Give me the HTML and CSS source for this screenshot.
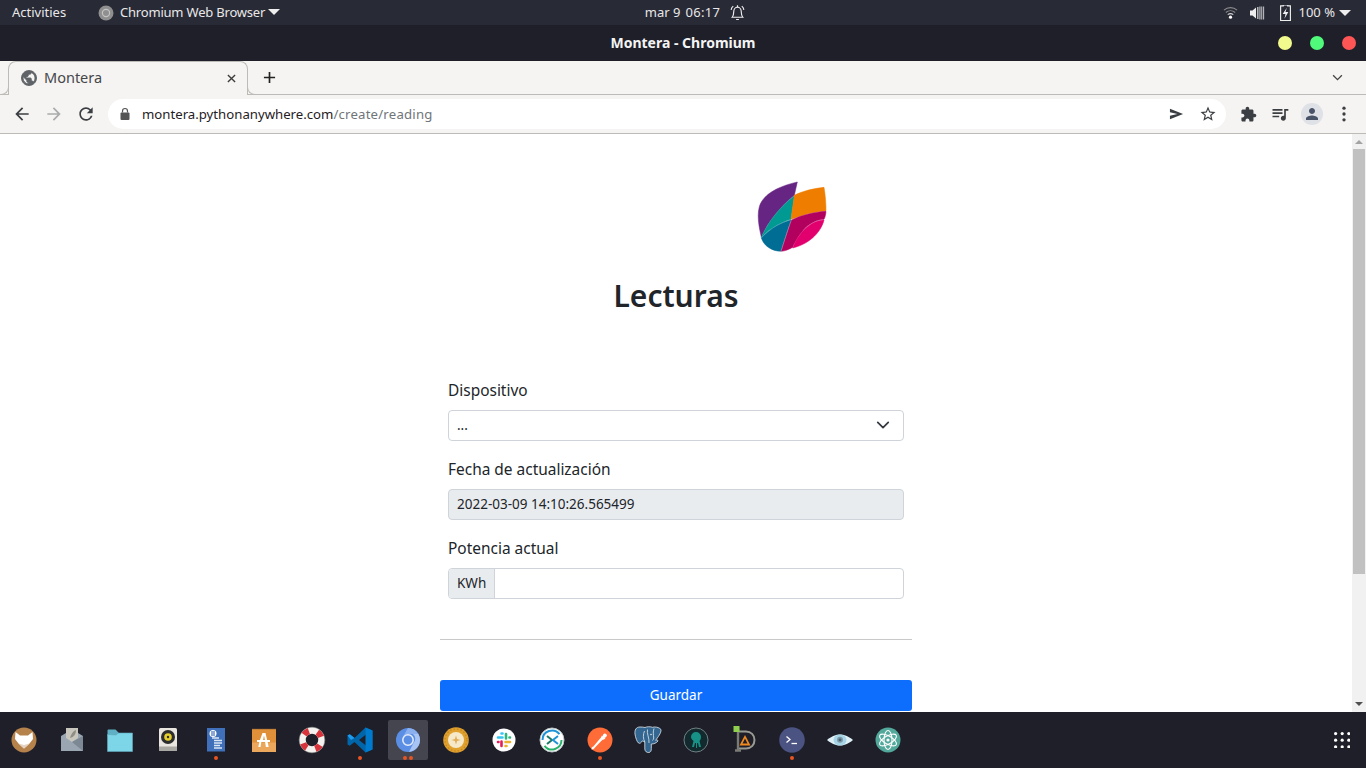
FILE: index.html
```html
<!DOCTYPE html>
<html lang="es">
<head>
  <meta charset="utf-8">
  <title>Montera - Chromium</title>
  <link rel="stylesheet" href="styles.css">
</head>
<body>
  <!-- gnome top bar -->
  <div class="panel">
    <div class="panel-left">
      <span class="activities">Activities</span>
      <span class="app-menu">
        <svg class="app-icon" viewBox="0 0 16 16"><circle cx="8" cy="8" r="7.5" fill="#8f8f8f"/><circle cx="8" cy="8" r="3.6" fill="#8f8f8f" stroke="#c4c4c4" stroke-width="1.2"/></svg>
        Chromium Web Browser
        <i class="caret"></i>
      </span>
    </div>
    <div class="panel-center">
      <span class="clock-date">mar 9</span>
      <span class="clock-time">06:17</span>
      <svg class="bell" viewBox="0 0 16 16" fill="none" stroke="#eee" stroke-width="1.1"><path d="M3 12.5c1.2-1.3 1.4-2.6 1.4-4.8C4.4 5 6 3 8 3s3.6 2 3.6 4.7c0 2.2.2 3.5 1.4 4.8z"/><path d="M6.7 14.6h2.6M8 1.2V3M2 5.5C2.2 4 3 2.8 4 2M14 5.5c-.2-1.5-1-2.7-2-3.5"/></svg>
    </div>
    <div class="panel-right">
      <svg class="wifi" viewBox="0 0 16 16" fill="none" stroke="#8d8d8d" stroke-width="1.1"><path d="M1 5.5c4-3.6 10-3.6 14 0M3 8c2.9-2.4 7.100-2.400 10 0" /><path d="M5 10.300c1.800-1.300 4.200-1.300 6 0" stroke="#cfcfcf"/><circle cx="8" cy="13" r="1.700" fill="#fff" stroke="none"/></svg>
      <svg class="volume" viewBox="0 0 16 16" fill="#eee"><path d="M1 5.500h2.500L7 2.500v11l-3.500-3H1z"/><path d="M8.300 2h1.100v12H8.300zM10.500 1.500h.9v13h-.9zM12.400 1.500h.8v13h-.8zM14.300 1.500h.8v13h-.8z"/></svg>
      <svg class="battery" viewBox="0 0 14 18"><path d="M4.500 1V0h5v1h3v16.500h-11V1z" fill="none" stroke="#eee" stroke-width="1.300"/><path d="M8.500 3 3.800 10H7l-1.200 5.500L10.200 8H7z" fill="#eee"/></svg>
      <span class="battery-text">100 %</span>
      <i class="caret"></i>
    </div>
  </div>

  <!-- window title -->
  <div class="titlebar">
    <span class="title-spacer"></span>
    <span class="title-text">Montera - Chromium</span>
    <span class="window-buttons">
      <i class="win-btn win-yellow"></i>
      <i class="win-btn win-green"></i>
      <i class="win-btn win-red"></i>
    </span>
  </div>

  <div class="tabstrip">
    <div class="tab">
      <svg class="tab-globe" viewBox="0 0 24 24"><path d="M12 2C6.480 2 2 6.480 2 12s4.480 10 10 10 10-4.480 10-10S17.520 2 12 2zm-1 17.930c-3.950-.490-7-3.850-7-7.930 0-.620.080-1.210.210-1.790L9 15v1c0 1.100.900 2 2 2v1.930zm6.900-2.540c-.260-.810-1-1.390-1.900-1.390h-1v-3c0-.550-.450-1-1-1H8v-2h2c.550 0 1-.450 1-1V7h2c1.100 0 2-.900 2-2v-.410c2.930 1.190 5 4.060 5 7.410 0 2.080-.800 3.970-2.100 5.390z"/></svg>
      <span class="tab-title">Montera</span>
      <svg class="tab-close" viewBox="0 0 10 10"><path d="M1 1l8 8M9 1l-8 8" stroke="#3c3c3c" stroke-width="1.500"/></svg>
    </div>
    <svg class="new-tab" viewBox="0 0 14 14"><path d="M7 1v12M1 7h12" stroke="#222" stroke-width="1.800"/></svg>
    <svg class="tab-search" viewBox="0 0 12 8"><path d="M1 1.500l5 5 5-5" fill="none" stroke="#444" stroke-width="1.500"/></svg>
  </div>

  <div class="toolbar">
    <button class="tool-btn"><svg viewBox="0 0 24 24"><path d="M20 11H7.830l5.590-5.590L12 4l-8 8 8 8 1.410-1.410L7.830 13H20v-2z"/></svg></button>
    <button class="tool-btn tool-off"><svg viewBox="0 0 24 24"><path d="M4 11h12.170l-5.590-5.590L12 4l8 8-8 8-1.410-1.410L16.170 13H4v-2z"/></svg></button>
    <button class="tool-btn"><svg viewBox="0 0 24 24"><path d="M17.650 6.350A7.958 7.958 0 0 0 12 4c-4.420 0-7.990 3.580-7.990 8s3.570 8 7.990 8c3.730 0 6.840-2.550 7.730-6h-2.080A5.990 5.990 0 0 1 12 18c-3.310 0-6-2.690-6-6s2.690-6 6-6c1.660 0 3.140.690 4.220 1.780L13 11h7V4l-2.350 2.350z"/></svg></button>
    <div class="omnibox">
      <svg class="lock" viewBox="0 0 12 14"><path d="M3.500 5.500V4a2.500 2.500 0 0 1 5 0v1.500" fill="none" stroke="#555" stroke-width="1.200"/><rect x="1.500" y="5.500" width="9" height="7.500" rx="1" fill="#555"/></svg>
      <span class="url"><span class="url-host">montera.pythonanywhere.com</span><span class="url-path">/create/reading</span></span>
      <button class="tool-btn"><svg class="send" viewBox="0 0 16 12"><path d="M1 .5 15 6 1 11.500V7.800L9 6 1 4.200z"/></svg></button>
      <button class="tool-btn"><svg class="star" viewBox="0 0 24 24"><path d="M22 9.240l-7.190-.620L12 2 9.190 8.630 2 9.240l5.460 4.730L5.820 21 12 17.270 18.180 21l-1.630-7.030L22 9.240zM12 15.400l-3.760 2.270 1-4.280-3.320-2.880 4.380-.380L12 6.100l1.710 4.040 4.380.380-3.320 2.880 1 4.280L12 15.400z"/></svg></button>
    </div>
    <button class="tool-btn"><svg class="puzzle" viewBox="0 0 24 24"><path d="M20.500 11H19V7c0-1.100-.900-2-2-2h-4V3.500C13 2.120 11.880 1 10.500 1S8 2.120 8 3.500V5H4c-1.100 0-1.990.900-1.990 2v3.800H3.500c1.490 0 2.700 1.210 2.700 2.700s-1.210 2.700-2.700 2.700H2V20c0 1.100.900 2 2 2h3.800v-1.500c0-1.490 1.210-2.700 2.700-2.700 1.490 0 2.700 1.210 2.700 2.700V22H17c1.100 0 2-.900 2-2v-4h1.500c1.380 0 2.500-1.120 2.500-2.500S21.880 11 20.500 11z"/></svg></button>
    <button class="tool-btn"><svg viewBox="0 0 24 24"><path d="M15 6H3v2h12V6zm0 4H3v2h12v-2zM3 16h8v-2H3v2zM17 6v8.180c-.310-.110-.650-.180-1-.180-1.660 0-3 1.340-3 3s1.340 3 3 3 3-1.340 3-3V8h3V6h-5z"/></svg></button>
    <button class="tool-btn"><span class="avatar"><svg viewBox="0 0 24 24"><path d="M12 12c2.210 0 4-1.790 4-4s-1.790-4-4-4-4 1.790-4 4 1.790 4 4 4zm0 2c-2.670 0-8 1.340-8 4v2h16v-2c0-2.660-5.330-4-8-4z"/></svg></span></button>
    <button class="tool-btn"><svg viewBox="0 0 24 24"><circle cx="12" cy="5" r="2"/><circle cx="12" cy="12" r="2"/><circle cx="12" cy="19" r="2"/></svg></button>
  </div>

  <div class="viewport">
    <main class="page">
      <div class="logo-row">
        <svg class="logo" viewBox="0 0 300 270">
          <path fill="#662483" stroke="#662483" d="M172 36C120 48 70 70 58 110c-8 30 0 65 6 92 16-42 56-92 99-126z"/>
          <path fill="#009a93" stroke="#009a93" d="M163 78c-43 32-78 77-99 124 26-27 61-47 89-54z"/>
          <path fill="#ef7d00" stroke="#ef7d00" d="M163 76c27-14 62-21 89-24 4 23 6 48 6 70-38 3-73 13-105 26z"/>
          <path fill="#006d95" stroke="#006d95" d="M153 150c-33 8-63 28-89 54 8 24 31 39 58 40 11-34 20-64 31-94z"/>
          <path fill="#b2005f" stroke="#b2005f" d="M155 150c30-15 70-24 103-26-1 12-3 19-6 24-42 2-72 37-94 84-10 6-23 11-34 12 11-34 21-66 31-94z"/>
          <path fill="#e2006e" stroke="#e2006e" d="M252 150c-7 30-37 70-94 84 17-44 52-82 94-84z"/>
        </svg>
      </div>
      <h1 class="page-title">Lecturas</h1>
      <form class="reading-form">
        <div class="fields">
          <label class="field-label">Dispositivo</label>
          <div class="select-box">
            <span>...</span>
            <svg class="select-arrow" viewBox="0 0 16 16"><path d="M2 5l6 6 6-6" fill="none" stroke="#343a40" stroke-width="2" stroke-linecap="round" stroke-linejoin="round"/></svg>
          </div>
          <label class="field-label">Fecha de actualización</label>
          <div class="text-box text-box-disabled">2022-03-09 14:10:26.565499</div>
          <label class="field-label">Potencia actual</label>
          <div class="input-group">
            <span class="input-addon">KWh</span>
            <span class="input-main"></span>
          </div>
        </div>
        <hr class="divider">
        <button class="save-btn" type="button">Guardar</button>
      </form>
    </main>
    <div class="scrollbar">
      <i class="scroll-up"></i>
      <div class="scroll-track"><div class="scroll-thumb"></div></div>
      <i class="scroll-down"></i>
    </div>
  </div>

  <!-- dock -->
  <div class="dock">
    <div class="dock-item"><svg viewBox="0 0 28 28"><circle cx="14" cy="14" r="12.500" fill="#b5824c"/><path fill="#fff" d="M5.500 6 10 9.500h8L22.500 6l.5 7-3.500 4.500L14 22.500l-5.500-5L5 13z"/><path fill="#e3d3c2" d="M14 22.500c-2-1.500-4-3.300-5.500-5l5.500 1.500 5.500-1.500c-1.500 1.700-3.500 3.500-5.500 5z"/></svg></div>
    <div class="dock-item"><svg viewBox="0 0 28 28"><path fill="#c9c7bd" d="M8 2h12v14H8z"/><path fill="#8f8d84" d="M12 12c1-4 3-7 6-8 0 4-2 7-6 8z"/><path fill="#9aa6b2" d="M3 10l5-3v5l6 4 6-4V7l5 3v15H3z"/><path fill="#7c8894" d="M14 16l11-6v15z"/></svg></div>
    <div class="dock-item"><svg viewBox="0 0 28 28"><path fill="#5fb0c5" d="M1.500 4.500a1 1 0 0 1 1-1h7l3 3v4h-11z"/><path fill="#7dd5e8" stroke="#5fa9bd" stroke-width=".6" d="M1.500 8.500 10 9l2.500-2h14v18.500h-25z"/></svg></div>
    <div class="dock-item"><svg viewBox="0 0 28 28"><rect x="5" y="2" width="18" height="23" rx="1.500" fill="#e8e6df"/><path fill="#a9a8a2" d="M5 20.500h18V24a1 1 0 0 1-1 1H6a1 1 0 0 1-1-1z"/><circle cx="14" cy="11" r="7" fill="#2d2d2d"/><circle cx="14" cy="11" r="3.800" fill="#e4cf2c"/><circle cx="14" cy="11" r="1.200" fill="#2d2d2d"/></svg></div>
    <div class="dock-item"><svg viewBox="0 0 28 28"><path fill="#3f70b9" d="M5 2h18v23.500H5z"/><circle cx="11" cy="7.500" r="3.500" fill="#fff"/><path stroke="#3f70b9" stroke-width="1.200" d="M10 5v5M12 5v5"/><path stroke="#dbe6f5" stroke-width="1.300" d="M10 12h7M12 14.500h8M12 17h8M12 19.500h6M12 22h8"/></svg><i class="run-dot"></i></div>
    <div class="dock-item"><svg viewBox="0 0 28 28"><path fill="#df9038" d="M2 3.500l1-1 1 1 1-1 1 1 1-1 1 1 1-1 1 1 1-1 1 1 1-1 1 1 1-1 1 1 1-1 1 1 1-1 1 1 1-1 1 1 1-1 1 1 1-1 1 1V26H2z"/><path fill="#eba85c" d="M2 16.500h24V26H2z"/><path fill="#fff" d="M12.500 7h3l1.600 7H20v2h-2.400l1.100 5h-2.800l-.8-5h-3.800l-.8 5H8.300l1.100-5H7v-2h2.900zm1.500 2.500-.9 4.500h1.800z"/></svg></div>
    <div class="dock-item"><svg viewBox="0 0 28 28"><circle cx="14" cy="14" r="9.500" fill="none" stroke="#f4f2ee" stroke-width="6.500"/><circle cx="14" cy="14" r="9.500" fill="none" stroke="#d8323a" stroke-width="6.500" stroke-dasharray="6 8.920" transform="rotate(33 14 14)"/><circle cx="14" cy="14" r="12.900" fill="none" stroke="#8a8a8a" stroke-width=".5"/></svg></div>
    <div class="dock-item"><svg viewBox="0 0 28 28"><path fill="#0065a9" d="M19.500 1.500 8.500 12 3.800 8.300 1.500 9.500v9l2.300 1.200 4.700-3.700 11 10.500 7-3V4.500zM20 8.500v11L13 14z"/><path fill="#007acc" d="M19.500 1.500l7 3v19l-7 3z"/><path fill="#1f9cf0" d="M3.800 8.300 1.500 9.500 5 14l3.500-2z"/></svg><i class="run-dot"></i></div>
    <div class="dock-item dock-active"><svg viewBox="0 0 28 28"><circle cx="14" cy="14" r="12" fill="#5b8fe6"/><path fill="#8ab0f0" d="M14 2a12 12 0 0 1 10.400 6H14a6 6 0 0 0-5.500 3.500z"/><path fill="#a7c4f4" d="M24.400 8A12 12 0 0 1 15 26l4.600-9.200A6 6 0 0 0 19 8z"/><circle cx="14" cy="14" r="5.200" fill="#5b8fe6" stroke="#e6eefb" stroke-width="1.500"/></svg><i class="run-dot run-dot-left"></i><i class="run-dot run-dot-right"></i></div>
    <div class="dock-item"><svg viewBox="0 0 28 28"><circle cx="14" cy="14" r="12.800" fill="#e0a02e"/><circle cx="14" cy="14" r="11" fill="none" stroke="#c7891f" stroke-width="1.300" stroke-dasharray="1.500 2"/><circle cx="14" cy="14" r="8" fill="#f6e9c9"/><path fill="#e2ad5a" d="M14 9.500l1.100 3.400 3.400 1.100-3.400 1.100-1.100 3.400-1.100-3.400L9.500 14l3.400-1.100z"/></svg></div>
    <div class="dock-item"><svg viewBox="0 0 28 28"><circle cx="14" cy="14" r="11.500" fill="#fff"/><path stroke="#36c5f0" stroke-width="2.600" stroke-linecap="round" d="M8 11.500h4.500M11.500 7.500h1"/><path stroke="#2eb67d" stroke-width="2.600" stroke-linecap="round" d="M16 8v4.500M20 11.500h-.5"/><path stroke="#ecb22e" stroke-width="2.600" stroke-linecap="round" d="M15.500 16H20M15.500 20h1"/><path stroke="#e01e5a" stroke-width="2.600" stroke-linecap="round" d="M11.500 15.500V20M8 16h.5"/></svg></div>
    <div class="dock-item"><svg viewBox="0 0 28 28"><circle cx="14" cy="14" r="12" fill="#fff" stroke="#bcc4c4"/><path fill="none" stroke="#1f93d6" stroke-width="2" d="M4.500 14a9.500 9.500 0 0 1 17-5.800"/><path fill="none" stroke="#2cb36b" stroke-width="2" d="M23.500 14a9.500 9.500 0 0 1-17 5.800"/><path fill="none" stroke="#1c7a68" stroke-width="2" d="M9 10l5 4-5 4"/><path fill="none" stroke="#1f93d6" stroke-width="2" d="M20 10l-5 4 5 4"/></svg></div>
    <div class="dock-item"><svg viewBox="0 0 28 28"><circle cx="14" cy="14" r="12.500" fill="#ff6c37"/><path fill="#fff" d="M6.500 21.500 14.500 12l2 1.800L8 22.500z"/><path fill="#fff" d="M16 9.500l3.500 3.300-3 1.200-2-1.800zM17.200 8.400a2 2 0 1 1 2.900 2.700 2 2 0 0 1-2.900-2.700z"/><path fill="#fff" d="M6 20.500l2.500 2.500-3 .5z"/></svg><i class="run-dot"></i></div>
    <div class="dock-item"><svg viewBox="0 0 28 28"><path fill="#336791" stroke="#e2e8ee" stroke-width=".8" d="M6 1C2 1 .5 4 1 8c.5 3.500 1.800 7.500 3.500 9 1.500 1 2.800-.5 4-2.200.8.700 1.500 1 2.300 1.200V23c.2 2.500 2 3.700 4 3.500 2-.2 2.500-1.700 2.500-4V18c2.500 0 5-.8 6.700-3 .3-.8-1-1-2.300-.7C23.500 11.500 27.500 7 27 3.500 25 1 20.500.5 18.500 1.300 16.500.5 13 .5 11 1.500 9.500 1 7.500 1 6 1z"/><path fill="none" stroke="#e2e8ee" stroke-width=".8" d="M10.800 16c-1.800-3-1.800-8-.3-11M13.500 3.500c-1 4 2 8.500 1.500 13.500M20 2.500c-1.200 3-.5 6.500-.3 9.500-.1 1-.4 1.800-1.200 2.500"/><circle cx="17" cy="8.500" r=".8" fill="#e2e8ee"/></svg></div>
    <div class="dock-item"><svg viewBox="0 0 28 28"><circle cx="14" cy="14" r="12" fill="#122a2e" stroke="#7b8a8c" stroke-width=".9"/><path fill="#179287" d="M14 6a5 5 0 0 1 5 5c0 2-.8 3-1.500 4l1.500 6h-2l-1-4h-1v5h-1v-5h-1l-1 4H10l1.500-6C10.800 14 9 13 9 11a5 5 0 0 1 5-5z"/></svg></div>
    <div class="dock-item"><svg viewBox="0 0 28 28"><path fill="none" stroke="#9a9a94" stroke-width="2" d="M8 5.500h8c5 0 8.500 3.500 8.500 8.500S21 22.500 16 22.500H8"/><path stroke="#7b7b76" stroke-width="2.400" d="M8 3v22M5 24.500h6"/><rect x="3.500" y="0" width="6" height="6" fill="#8fd14f"/><path fill="#f28a1f" d="M15 9l5.500 10.500h-11z"/><path fill="#1e1f29" d="M15 12.500l2.500 5h-5z"/></svg></div>
    <div class="dock-item"><svg viewBox="0 0 28 28"><circle cx="14" cy="14" r="12.800" fill="#4a5381"/><path fill="none" stroke="#fff" stroke-width="1.300" d="M8.500 10.500 12 13.500l-3.500 3"/><path stroke="#fff" stroke-width="1.300" d="M13.500 17.500H19"/></svg><i class="run-dot"></i></div>
    <div class="dock-item"><svg viewBox="0 0 28 28"><path fill="#dff0f6" d="M1 14C6 10 10 8.500 14 8.500S22 10 27 14c-5 4-9 5.500-13 5.500S6 18 1 14z"/><ellipse cx="14" cy="14" rx="6.500" ry="5.500" fill="#a5d4e6"/><circle cx="14" cy="13.800" r="3" fill="#7d99a9"/><circle cx="14" cy="13.800" r="1.400" fill="#4a6272"/></svg></div>
    <div class="dock-item"><svg viewBox="0 0 28 28"><circle cx="14" cy="14" r="12.500" fill="#53a89c"/><g fill="none" stroke="#fff" stroke-width="1.100"><ellipse cx="14" cy="14" rx="9.500" ry="4" transform="rotate(30 14 14)"/><ellipse cx="14" cy="14" rx="9.500" ry="4" transform="rotate(-30 14 14)"/><ellipse cx="14" cy="14" rx="9.500" ry="4" transform="rotate(90 14 14)"/></g><circle cx="14" cy="14" r="1.600" fill="#fff"/></svg></div>
    <div class="dock-fill"></div>
    <svg class="apps-grid" viewBox="0 0 16 16" fill="#fff"><circle cx="1.600" cy="1.600" r="1.600"/><circle cx="8.200" cy="1.600" r="1.600"/><circle cx="14.800" cy="1.600" r="1.600"/><circle cx="1.600" cy="8.200" r="1.600"/><circle cx="8.200" cy="8.200" r="1.600"/><circle cx="14.800" cy="8.200" r="1.600"/><circle cx="1.600" cy="14.800" r="1.600"/><circle cx="8.200" cy="14.800" r="1.600"/><circle cx="14.800" cy="14.800" r="1.600"/></svg>
  </div>
</body>
</html>
```

FILE: styles.css
```css
html, body {
  margin: 0;
  height: 100%;
  overflow: hidden;
}

body {
  display: flex;
  flex-direction: column;
  width: 1366px;
  height: 768px;
  background-color: #fff;
  font-family: "Noto Sans", "Open Sans", sans-serif;
  color: #212529;
}

svg {
  display: block;
  flex: none;
}

/* top bar */
.panel {
  display: grid;
  grid-template-columns: 1fr auto 1fr;
  align-items: center;
  height: 25px;
  flex: none;
  background-color: #282a36;
  color: #e8e8e8;
  font-size: 13px;
}

.panel span {
  padding-bottom: 2px;
}

.panel-left {
  display: flex;
  align-items: center;
  padding-left: 12px;
}

.activities {
  width: 86px;
}

.app-menu {
  display: flex;
  align-items: center;
  gap: 6px;
  letter-spacing: -0.2px;
}

.app-icon {
  width: 16px;
  height: 16px;
  margin-top: 2px;
}

.caret {
  display: block;
  width: 0;
  height: 0;
  border-left: 6px solid transparent;
  border-right: 6px solid transparent;
  border-top: 6px solid #eee;
}

.app-menu .caret {
  margin-left: -3px;
}

.panel-center {
  display: flex;
  align-items: center;
  gap: 5px;
  margin-left: 25px;
}

.clock-time {
  letter-spacing: 0.3px;
}

.bell {
  width: 17px;
  height: 17px;
  margin-left: 4px;
}

.panel-right {
  display: flex;
  align-items: center;
  justify-content: flex-end;
  padding-right: 15px;
}

.wifi {
  width: 15px;
  height: 15px;
  margin-right: 11px;
}

.volume {
  width: 16px;
  height: 16px;
  margin-right: 14px;
}

.battery {
  width: 13px;
  height: 16px;
  margin-right: 7px;
}

.battery-text {
  margin-right: 4px;
}

/* window title */
.titlebar {
  display: grid;
  grid-template-columns: 1fr auto 1fr;
  align-items: center;
  height: 36px;
  flex: none;
  background-color: #1e1f29;
  color: #f4f4f4;
}

.title-text {
  padding-bottom: 2px;
  font-size: 14px;
  font-weight: 700;
}

.window-buttons {
  display: flex;
  justify-content: flex-end;
  gap: 18px;
  padding-right: 10px;
}

.win-btn {
  display: block;
  width: 14px;
  height: 14px;
  border-radius: 50%;
}

.win-yellow { background-color: #f1fa8c; }
.win-green { background-color: #50fa7b; }
.win-red { background-color: #ff5555; }

/* tabs */
.tabstrip {
  display: flex;
  align-items: center;
  height: 34px;
  flex: none;
  box-sizing: border-box;
  padding-left: 8px;
  background-color: #f5f4f2;
  border-bottom: 1px solid #bdbbb7;
}

.tab {
  position: relative;
  display: flex;
  align-items: center;
  box-sizing: border-box;
  width: 240px;
  height: 34px;
  margin-top: 1px;
  padding: 0 11px 0 11px;
  background-color: #f5f4f2;
  border: 1px solid #bdbbb7;
  border-bottom: none;
  border-radius: 8px 8px 0 0;
}

.tab::before,
.tab::after {
  content: "";
  position: absolute;
  bottom: 0;
  width: 8px;
  height: 8px;
  border-bottom: 1px solid #bdbbb7;
}

.tab::before {
  left: -9px;
  border-right: 1px solid #bdbbb7;
  border-bottom-right-radius: 8px;
}

.tab::after {
  right: -9px;
  border-left: 1px solid #bdbbb7;
  border-bottom-left-radius: 8px;
}

.tab-globe {
  width: 18px;
  height: 18px;
  margin-bottom: 1px;
  fill: #5f6368;
  stroke: #5f6368;
  stroke-width: 1.200px;
}

.tab-title {
  flex: 1;
  margin-left: 6px;
  padding-bottom: 4px;
  font-size: 14.500px;
  color: #45474a;
}

.tab-close {
  width: 9px;
  height: 9px;
}

.new-tab {
  width: 13px;
  height: 13px;
  margin-left: 15px;
}

.tab-search {
  width: 11px;
  height: 7px;
  margin-left: auto;
  margin-right: 23px;
}

/* toolbar */
.toolbar {
  display: flex;
  align-items: center;
  height: 39px;
  flex: none;
  box-sizing: border-box;
  padding: 0 6px;
  background-color: #f5f4f2;
  border-bottom: 1px solid #bdbbb7;
}

.tool-btn {
  display: flex;
  align-items: center;
  justify-content: center;
  flex: none;
  width: 32px;
  height: 30px;
  padding: 0;
  border: none;
  background: none;
}

.tool-btn svg {
  width: 20px;
  height: 20px;
  fill: #3b3e42;
}

.tool-btn .puzzle {
  width: 17px;
  height: 17px;
}

.tool-off svg {
  fill: #a9abac;
}

.omnibox {
  display: flex;
  align-items: center;
  flex: 1;
  height: 30px;
  margin: 0 6px;
  padding: 0 2px 0 11px;
  border-radius: 15px;
  background-color: #fff;
}

.lock {
  width: 12px;
  height: 14px;
}

.url {
  flex: 1;
  margin-left: 11px;
  padding-bottom: 1px;
  font-size: 13.200px;
}

.url-host {
  color: #1f2124;
}

.url-path {
  color: #70757a;
  letter-spacing: 0.2px;
}

.tool-btn .send {
  width: 15px;
  height: 12px;
}

.tool-btn .star {
  width: 18px;
  height: 18px;
}

.avatar {
  display: flex;
  align-items: center;
  justify-content: center;
  width: 22px;
  height: 22px;
  border-radius: 50%;
  background-color: #dee1e6;
}

.tool-btn .avatar svg {
  width: 18px;
  height: 18px;
  fill: #4a5468;
}

/* page */
.viewport {
  display: flex;
  flex: 1;
  min-height: 0;
  overflow: hidden;
}

.page {
  flex: 1;
  display: flex;
  flex-direction: column;
  align-items: center;
  min-width: 0;
}

.logo-row {
  align-self: stretch;
  padding: 36px 0 0 740px;
}

.logo {
  width: 100px;
  height: 90px;
}

.logo path {
  stroke-width: 1.500px;
}

.page-title {
  margin: 15px 0 0;
  font-size: 30px;
  font-weight: 600;
  line-height: 42px;
  color: #212529;
}

.reading-form {
  width: 472px;
  margin-top: 61px;
}

.fields {
  padding: 0 8px;
}

.field-label {
  display: block;
  padding-top: 1px;
  font-size: 15.450px;
  line-height: 23px;
  margin-bottom: 8px;
}

.select-box,
.text-box,
.input-group {
  box-sizing: border-box;
  display: flex;
  align-items: center;
  height: 31px;
  margin-bottom: 16px;
  padding-bottom: 1px;
  border: 1px solid #ced4da;
  border-radius: 4px;
  font-size: 13.500px;
}

.select-box,
.text-box {
  padding-left: 8px;
  padding-right: 8px;
}

.select-box {
  justify-content: space-between;
  padding-right: 13px;
}

.select-arrow {
  width: 14px;
  height: 14px;
}

.text-box-disabled {
  background-color: #e9ecef;
}

.input-group {
  overflow: hidden;
  margin-bottom: 0;
  padding-bottom: 0;
}

.input-addon {
  display: flex;
  align-items: center;
  height: 100%;
  padding: 0 8px 2px;
  box-sizing: border-box;
  background-color: #e9ecef;
  border-right: 1px solid #ced4da;
}

.input-main {
  flex: 1;
}

.divider {
  height: 1px;
  margin: 40px 0;
  border: none;
  background-color: #c9c9c9;
}

.save-btn {
  display: block;
  width: 100%;
  height: 31px;
  padding: 0 0 1px;
  border: none;
  border-radius: 3px;
  background-color: #0d6efd;
  color: #fff;
  font-family: inherit;
  font-size: 13.500px;
}

/* scrollbar */
.scrollbar {
  display: flex;
  flex-direction: column;
  align-items: center;
  flex: none;
  width: 14px;
  background-color: #f1f1f1;
}

.scroll-up,
.scroll-down {
  display: block;
  width: 0;
  height: 0;
  border-left: 4px solid transparent;
  border-right: 4px solid transparent;
}

.scroll-up {
  margin: 6px 0 5px;
  border-bottom: 4px solid #a3a3a3;
}

.scroll-track {
  flex: 1;
  align-self: stretch;
  padding: 0 1px;
}

.scroll-thumb {
  height: 425px;
  background-color: #c1c1c1;
}

.scroll-down {
  margin: 5px 0 6px;
  border-top: 4px solid #505050;
}

/* dock */
.dock {
  display: flex;
  align-items: center;
  height: 56px;
  flex: none;
  background-color: #1e1f29;
}

.dock-item {
  position: relative;
  display: flex;
  align-items: center;
  justify-content: center;
  width: 48px;
  height: 40px;
}

.dock-item svg {
  width: 28px;
  height: 28px;
}

.dock-active::before {
  content: "";
  position: absolute;
  top: 0;
  left: 4px;
  width: 40px;
  height: 40px;
  border-radius: 2px;
  background-color: #44454f;
}

.dock-active svg {
  position: relative;
}

.run-dot {
  position: absolute;
  bottom: 0;
  left: 22px;
  width: 4px;
  height: 4px;
  border-radius: 50%;
  background-color: #e95420;
}

.dock-active .run-dot-left { left: 19px; }
.dock-active .run-dot-right { left: 25px; }

.dock-fill {
  flex: 1;
}

.apps-grid {
  width: 16px;
  height: 16px;
  margin-right: 16px;
}
```
